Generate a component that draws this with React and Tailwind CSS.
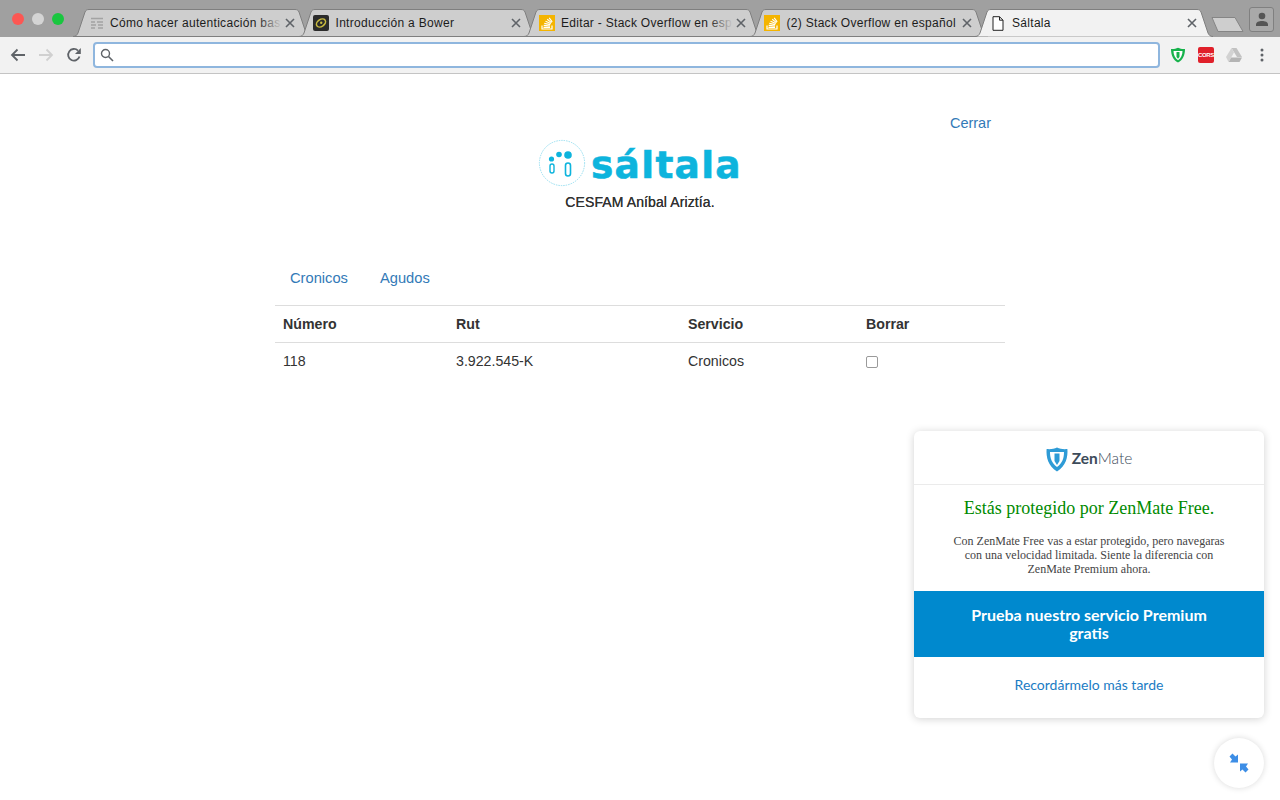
import React from "react";

const Close = () => (
  <svg width="10" height="10" viewBox="0 0 10 10" className="shrink-0">
    <path d="M1 1L9 9M9 1L1 9" stroke="#5f6368" strokeWidth="1.6" fill="none" />
  </svg>
);

const LinesIcon = () => (
  <svg width="14" height="14" viewBox="0 0 14 14">
    <path d="M1 2.5H13M1 6H5M7 6H13M1 9H6M8 9H13M1 12H5M8 12H13" stroke="#a3a3a3" strokeWidth="1.4" fill="none" />
  </svg>
);

const BowerIcon = () => (
  <svg width="16" height="16" viewBox="0 0 16 16">
    <rect width="16" height="16" rx="2" fill="#2b2b2b" />
    <ellipse cx="8" cy="8" rx="5" ry="3.4" transform="rotate(-35 8 8)" fill="none" stroke="#c9bb3f" strokeWidth="1.6" />
    <circle cx="8.2" cy="7.8" r="1.2" fill="#c9bb3f" />
  </svg>
);

const SoIcon = () => (
  <svg width="16" height="16" viewBox="0 0 16 16">
    <rect width="16" height="16" fill="#f4b400" />
    <path d="M3 10.5V14H13V10.5" stroke="#fff" strokeWidth="1.2" fill="none" />
    <path d="M4.5 12.4H11M4.7 10.4L11 11M5.3 8.4L11.3 9.6M6.5 6.3L11.9 8.5M8.2 4.3L12.5 7.6M10.2 2.8L13.2 6.8" stroke="#fff" strokeWidth="1.1" fill="none" />
  </svg>
);

const PageIcon = () => (
  <svg width="12" height="15" viewBox="0 0 12 15">
    <path d="M1 .7H7.5L11 4.2V14.3H1ZM7.5 .7V4.2H11" fill="#fff" stroke="#222" strokeWidth="1" />
  </svg>
);

const tabs = [
  { title: "Cómo hacer autenticación bas", icon: <LinesIcon />, fade: true, iconClass: "left-[17px]" },
  { title: "Introducción a Bower", icon: <BowerIcon />, iconClass: "left-[14.5px]" },
  { title: "Editar - Stack Overflow en esp", icon: <SoIcon />, fade: true, iconClass: "left-[15px]" },
  { title: "(2) Stack Overflow en español", icon: <SoIcon />, iconClass: "left-[14.5px]" },
  { title: "Sáltala", icon: <PageIcon />, active: true, iconClass: "left-[17px]" },
];

function Tab({ tab }) {
  return (
    <div className={`relative h-[28px] w-[225.5px] shrink-0 ${tab.active ? "z-10" : ""}`}>
      <svg width="238" height="28" viewBox="0 0 238 28" className="absolute left-0 top-0">
        {tab.active ? (
          <path d="M0 27.5C3 27.5 4 26 5 24L12 3C13 1 14 .5 16 .5H222C224 .5 225 1 226 3L233 24C234 26 235 27.5 238 27.5" fill="#f2f2f2" stroke="#7f7f7f" strokeWidth="1" />
        ) : (
          <path d="M0 27.5C3 27.5 4 26 5 24L12 3C13 1 14 .5 16 .5H222C224 .5 225 1 226 3L233 24C234 26 235 27.5 238 27.5Z" fill="#cecece" stroke="#7f7f7f" strokeWidth="1" />
        )}
      </svg>
      <div className={`absolute top-[6px] flex h-[16px] items-center ${tab.iconClass}`}>{tab.icon}</div>
      <div className="absolute left-[37px] top-[5px] w-[172px] whitespace-nowrap text-[12px] leading-[18px] tracking-[0.3px] text-[#1c1c1c]">
        {tab.title}
        {tab.fade && <div className="absolute right-0 top-0 h-full w-[24px] bg-gradient-to-r from-transparent to-[#cecece]" />}
      </div>
      <div className="absolute left-[212px] top-[9px]"><Close /></div>
    </div>
  );
}

function Chrome() {
  return (
    <header className="font-['Liberation_Sans',sans-serif]">
      <div className="relative flex h-[37px] bg-[#a0a0a0]">
        <div className="flex w-[73px] shrink-0 items-start gap-[8px] pl-[12px] pt-[13px]">
          <span className="h-[12px] w-[12px] rounded-full bg-[#fc5753]" />
          <span className="h-[12px] w-[12px] rounded-full bg-[#d4d4d4]" />
          <span className="h-[12px] w-[12px] rounded-full bg-[#19c63f]" />
        </div>
        <div className="flex items-start pt-[9px]">
          {tabs.map((t) => <Tab key={t.title} tab={t} />)}
          <svg width="34" height="15" viewBox="0 0 34 15" className="ml-[10px] mt-[8px] shrink-0">
            <path d="M1 .5H24L32 14.5H7Z" fill="#cecece" stroke="#858585" />
          </svg>
        </div>
        <div className="absolute right-[6px] top-[7px] flex h-[25px] w-[25px] items-center justify-center rounded-[3px] border border-[#808080] bg-[#a9a9a9]">
          <svg width="14" height="15" viewBox="0 0 14 15">
            <circle cx="7" cy="4" r="3.3" fill="#555" />
            <path d="M1 14V12.5C1 10 4 9 7 9S13 10 13 12.5V14Z" fill="#555" />
          </svg>
        </div>
      </div>
      <div className="flex h-[37px] items-center border-b border-[#c4c4c4] bg-[#f2f2f2]">
        <div className="flex w-[93px] shrink-0 items-center gap-[12px] pl-[10px]">
          <svg width="16" height="14" viewBox="0 0 16 14"><path d="M15 7H2M7.5 1.5L2 7L7.5 12.5" stroke="#5f6368" strokeWidth="1.8" fill="none" /></svg>
          <svg width="16" height="14" viewBox="0 0 16 14"><path d="M1 7H14M8.5 1.5L14 7L8.5 12.5" stroke="#d0d0d0" strokeWidth="1.8" fill="none" /></svg>
          <svg width="16" height="16" viewBox="0 0 16 16"><path d="M13.5 9.5A5.8 5.8 0 1 1 12 3.6" stroke="#5f6368" strokeWidth="1.8" fill="none" /><path d="M14.8 1V7H9Z" fill="#5f6368" /></svg>
        </div>
        <div className="flex h-[26px] w-[1067px] items-center rounded-[4px] border-2 border-[#8fb6de] bg-white pl-[5px]">
          <svg width="14" height="14" viewBox="0 0 14 14"><circle cx="5.5" cy="5.5" r="4" stroke="#5f6368" strokeWidth="1.4" fill="none" /><path d="M8.5 8.5L13 13" stroke="#5f6368" strokeWidth="1.6" /></svg>
        </div>
        <div className="ml-[10px] flex items-center gap-[12px]">
          <svg width="16" height="16" viewBox="0 0 16 16">
            <path d="M8 .8C10.5 2 12.5 2.2 15 2C15 8 13 13 8 15.5C3 13 1 8 1 2C3.5 2.2 5.5 2 8 .8Z" fill="#16b24b" />
            <path d="M3.5 4H12.5C12.5 8 11 11 8 13.3C5 11 3.5 8 3.5 4Z" fill="#fff" />
            <path d="M6.5 5H9.5V10L8 11.8L6.5 10Z" fill="#16b24b" />
          </svg>
          <div className="flex h-[16px] w-[16px] items-center justify-center overflow-hidden rounded-[2px] bg-[#e0202a] text-[6px] font-bold leading-none tracking-[-0.3px] text-white">CORS</div>
          <svg width="16" height="14" viewBox="0 0 16 14">
            <path d="M5.5 0H10.5L16 9H11Z" fill="#c2c2c2" /><path d="M5.5 0L0 9L2.5 14L8 4.6Z" fill="#d2d2d2" /><path d="M5.2 9.5H16L13.5 14H2.7Z" fill="#b4b4b4" />
          </svg>
          <svg width="16" height="16" viewBox="0 0 16 16">
            <circle cx="8" cy="3" r="1.5" fill="#5f6368" /><circle cx="8" cy="8" r="1.5" fill="#5f6368" /><circle cx="8" cy="13" r="1.5" fill="#5f6368" />
          </svg>
        </div>
      </div>
    </header>
  );
}

function SaltalaLogo() {
  return (
    <div className="flex items-start justify-center">
      <svg width="48" height="48" viewBox="0 0 48 48" className="shrink-0">
        <circle cx="24" cy="24" r="22.6" fill="none" stroke="#7fd6ec" strokeWidth=".8" strokeDasharray="1.5 1" />
        <circle cx="13.5" cy="20" r="2.6" fill="#0db4dd" /><circle cx="21" cy="15.5" r="2.8" fill="#0db4dd" /><circle cx="30" cy="16" r="3.8" fill="#0db4dd" />
        <rect x="12" y="25" width="4" height="9" rx="2" fill="none" stroke="#0db4dd" strokeWidth="1.4" />
        <rect x="27.5" y="24" width="5" height="13" rx="2.5" fill="none" stroke="#0db4dd" strokeWidth="1.6" />
      </svg>
      <span className="ml-[5px] mt-[4px] font-['DejaVu_Sans',sans-serif] text-[37.5px] font-bold leading-[44px] tracking-[1.3px] text-[#0db4dd] [-webkit-text-stroke:0.6px_#0db4dd]">sáltala</span>
    </div>
  );
}

function Content() {
  return (
    <main className="relative mx-auto h-[726px] w-[730px] pt-[39px] font-['Liberation_Sans',sans-serif] text-[14.2px] text-[#333]">
      <div className="flex justify-end pr-[14px] text-[14.5px] leading-[20px] text-[#337ab7]">Cerrar</div>
      <div className="mt-[6px]"><SaltalaLogo /></div>
      <p className="mt-[5px] text-center text-[14px] leading-[20px] tracking-[0.1px] [text-shadow:0_0_0_#333]">CESFAM Aníbal Ariztía.</p>
      <nav className="mt-[45px] flex h-[42px] items-center gap-[32px] pl-[15px] text-[14.7px] text-[#337ab7]">
        <span>Cronicos</span><span>Agudos</span>
      </nav>
      <div className="mt-[6px] border-t border-[#ddd]">
        <div className="grid h-[37px] grid-cols-[173px_232px_178px_1fr] items-center border-b border-[#ddd] pl-[8px] pt-[1px] font-bold">
          <span>Número</span><span>Rut</span><span>Servicio</span><span>Borrar</span>
        </div>
        <div className="grid h-[37px] grid-cols-[173px_232px_178px_1fr] items-center pl-[8px]">
          <span>118</span><span>3.922.545-K</span><span>Cronicos</span>
          <span className="block h-[12px] w-[12px] rounded-[2px] border border-[#9a9a9a] bg-white" />
        </div>
      </div>
    </main>
  );
}

function ZenMate() {
  return (
    <>
      <aside className="absolute left-[914px] top-[431px] h-[287px] w-[350px] overflow-hidden rounded-[6px] bg-white text-center shadow-[0_1px_8px_rgba(0,0,0,0.18)]">
        <div className="flex h-[54px] items-center justify-center border-b border-[#ebebeb] pt-[3px]">
          <svg width="22" height="25" viewBox="0 0 22 25" className="mr-[4px]">
            <path d="M11 .6C14 2 18 2.4 21.4 2C22 10 20 19 11 24.4C2 19 0 10 .6 2C4 2.4 8 2 11 .6Z" fill="#2e9bd6" />
            <path d="M4 5H18C18 11 16.5 16 11 20C5.5 16 4 11 4 5Z" fill="#fff" />
            <path d="M8.5 6.5H13.5V14L11 18L8.5 14Z" fill="#2e9bd6" />
          </svg>
          <span className="font-['Lato',sans-serif] text-[15.5px] leading-none text-[#3d4b5a]"><b>Zen</b><span className="font-light">Mate</span></span>
        </div>
        <h2 className="mt-[12px] font-['Liberation_Serif',serif] text-[18px] leading-[22px] text-[#008a00]">Estás protegido por ZenMate Free.</h2>
        <p className="mt-[15px] px-[30px] font-['Liberation_Serif',serif] text-[12px] leading-[14px] text-[#444]">
          Con ZenMate Free vas a estar protegido, pero navegaras<br />con una velocidad limitada. Siente la diferencia con<br />ZenMate Premium ahora.
        </p>
        <div className="mt-[15px] flex h-[66px] items-center justify-center bg-[#0089ce] px-[50px] font-['Lato',sans-serif] text-[16px] font-bold leading-[18px] text-white">
          Prueba nuestro servicio Premium gratis
        </div>
        <div className="mt-[19px] font-['Lato',sans-serif] text-[14px] leading-[18px] text-[#1a7cc4]">Recordármelo más tarde</div>
      </aside>
      <button className="absolute left-[1214px] top-[738px] flex h-[50px] w-[50px] items-center justify-center rounded-full bg-white shadow-[0_0_6px_rgba(0,0,0,0.15)]">
        <svg width="20" height="20" viewBox="0 0 20 20">
          <path d="M.5 3.5L3.5 .5L6.5 3.5L9 1.5V9.5H1L3 6.5Z" fill="#3d8ee6" />
          <path d="M19.5 16.5L16.5 19.5L13.5 16.5L11 18.5V10.5H19L17 13.5Z" fill="#3d8ee6" />
        </svg>
      </button>
    </>
  );
}

export default function App() {
  return (
    <div className="relative h-[800px] w-[1280px] overflow-hidden bg-white">
      <Chrome />
      <Content />
      <ZenMate />
    </div>
  );
}
